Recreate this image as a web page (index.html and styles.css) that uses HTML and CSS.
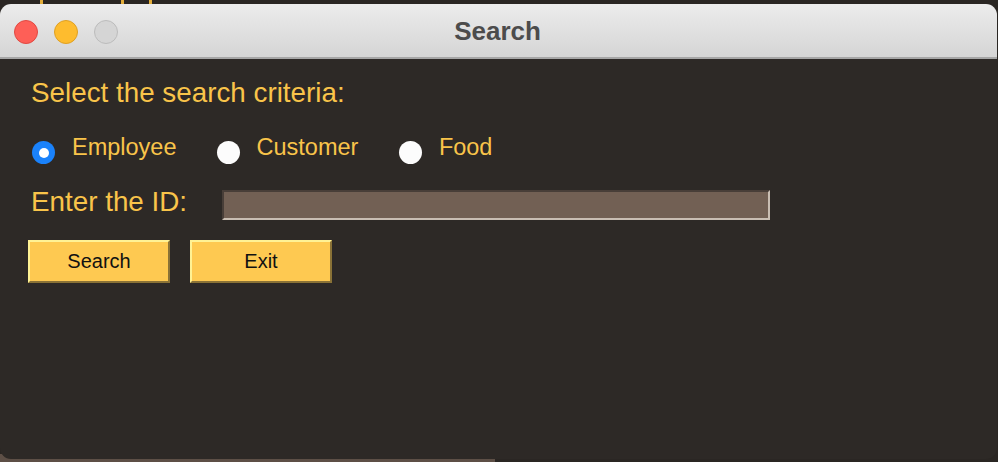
FILE: index.html
```html
<!DOCTYPE html>
<html>
<head>
<meta charset="utf-8">
<link rel="stylesheet" href="styles.css">
</head>
<body>
<div class="desk">
  <span class="tick t1"></span><span class="tick t2"></span><span class="tick t3"></span>
  <span class="under"></span>
  <div class="window">
    <div class="titlebar">
      <div class="lights">
        <span class="light red"></span>
        <span class="light yellow"></span>
        <span class="light gray"></span>
      </div>
      <div class="title">Search</div>
    </div>
    <div class="content">
      <div class="heading">Select the search criteria:</div>
      <div class="radios">
        <div class="radio-item"><span class="radio on"></span><span class="rlabel">Employee</span></div>
        <div class="radio-item"><span class="radio"></span><span class="rlabel">Customer</span></div>
        <div class="radio-item"><span class="radio"></span><span class="rlabel">Food</span></div>
      </div>
      <div class="id-row">
        <span class="id-label">Enter the ID:</span>
        <span class="entry"></span>
      </div>
      <div class="buttons">
        <span class="btn">Search</span>
        <span class="btn">Exit</span>
      </div>
    </div>
  </div>
</div>
</body>
</html>
```

FILE: styles.css
```css
html, body {
  margin: 0;
  padding: 0;
}
body {
  background: #2a2623;
  font-family: "Liberation Sans", Arial, sans-serif;
}
.desk {
  position: relative;
  width: 998px;
  height: 462px;
  overflow: hidden;
  background: #2a2623;
}
.tick {
  position: absolute;
  top: 0;
  width: 3px;
  height: 6px;
  background: #e3ad3a;
}
.t1 { left: 40px; }
.t2 { left: 121px; }
.t3 { left: 149px; }
.under {
  position: absolute;
  left: 0;
  bottom: 0;
  width: 495px;
  height: 8px;
  background: #5d4f46;
}
.window {
  position: relative;
  margin-top: 4px;
  width: 997px;
  height: 455px;
  border-radius: 11px;
  overflow: hidden;
  background: #2d2926;
  display: flex;
  flex-direction: column;
}
.titlebar {
  position: relative;
  height: 53px;
  border-bottom: 2px solid #a6a6a6;
  background: linear-gradient(#ececec, #d5d5d5);
  display: flex;
  align-items: center;
  justify-content: center;
  flex-shrink: 0;
}
.lights {
  position: absolute;
  left: 14px;
  top: 16px;
  display: flex;
  gap: 16px;
}
.light {
  width: 24px;
  height: 24px;
  border-radius: 50%;
  box-sizing: border-box;
}
.light.red { background: #fe5f57; border: 1px solid #e14942; }
.light.yellow { background: #febc2e; border: 1px solid #dfa023; }
.light.gray { background: #d5d5d5; border: 1px solid #bcbcbc; }
.title {
  font-weight: bold;
  font-size: 26px;
  color: #4c4c4c;
  margin-left: -2px;
  margin-top: 1px;
}
.content {
  padding: 18px 0 0 31px;
  display: flex;
  flex-direction: column;
  color: #f9c44a;
}
.heading {
  font-size: 27.8px;
  line-height: 32px;
  height: 32px;
}
.radios {
  margin-top: 26px;
  margin-left: -2px;
  display: flex;
  height: 30px;
}
.radio-item {
  display: flex;
  align-items: flex-start;
}
.radio-item + .radio-item {
  margin-left: 37px;
}
.radio-item + .radio-item + .radio-item {
  margin-left: 37.5px;
}
.radio {
  width: 23px;
  height: 23px;
  border-radius: 50%;
  background: #fcfcfc;
  margin-top: 6px;
  margin-left: 3px;
  position: relative;
  flex-shrink: 0;
}
.radio.on {
  background: #1a82fb;
}
.radio.on::after {
  content: "";
  position: absolute;
  left: 6.5px;
  top: 6.5px;
  width: 10px;
  height: 10px;
  border-radius: 50%;
  background: #ffffff;
}
.rlabel {
  font-size: 23.5px;
  line-height: 24px;
  margin-left: 17px;
}
.id-row {
  margin-top: 21px;
  display: flex;
  align-items: flex-start;
  height: 34px;
}
.id-label {
  font-size: 27.8px;
  line-height: 32px;
  width: 191px;
}
.entry {
  margin-top: 4px;
  width: 548px;
  height: 30px;
  box-sizing: border-box;
  background: #726054;
  border-top: 2px solid #483e38;
  border-left: 2px solid #483e38;
  border-bottom: 2px solid #c9beb3;
  border-right: 2px solid #c9beb3;
}
.buttons {
  margin-top: 20px;
  margin-left: -3px;
  display: flex;
  gap: 20px;
}
.btn {
  width: 142px;
  height: 43px;
  box-sizing: border-box;
  background: #fec951;
  border-top: 2px solid #fff294;
  border-left: 2px solid #fff294;
  border-bottom: 2px solid #8a7236;
  border-right: 2px solid #8a7236;
  color: #111111;
  font-size: 20px;
  display: flex;
  align-items: center;
  justify-content: center;
}
```
